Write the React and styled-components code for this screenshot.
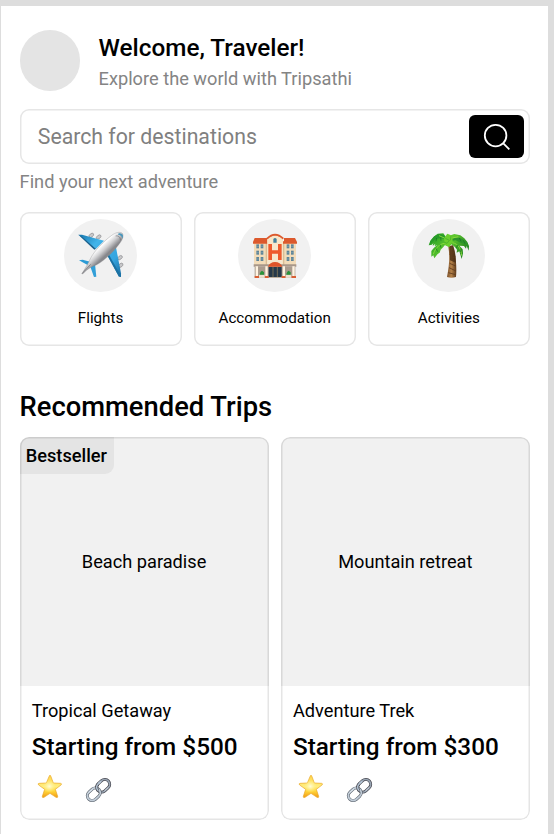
import React from "react";
import styled, { createGlobalStyle } from "styled-components";

const GlobalStyle = createGlobalStyle`
  *, *::before, *::after { box-sizing: border-box; }
  body { margin: 0; background: #dddddd; font-family: Roboto, sans-serif; color: #000; }
  h1, h2, p { margin: 0; }
  button { font: inherit; }
`;

const Screen = styled.main`
  width: 546.6px;
  height: 828px;
  margin: 6px 0 0 1.4px;
  padding: 24.2px 18.2px 0;
  background: #fff;
  overflow: hidden;
`;

const Header = styled.header`
  display: flex;
  align-items: center;
  gap: 18.2px;
  height: 60.8px;
`;

const Avatar = styled.div`
  width: 60.8px;
  height: 60.8px;
  border-radius: 50%;
  background: #e4e4e4;
`;

const Title = styled.h1`
  font-size: 24.3px;
  line-height: 36px;
  font-weight: 500;
`;

const Muted = styled.p`
  font-size: 18.23px;
  line-height: 25px;
  color: #848484;
`;

const SearchBar = styled.div`
  display: flex;
  align-items: center;
  justify-content: space-between;
  height: 54.4px;
  margin: 18.4px 0 5px;
  padding: 0 6px 0 18.2px;
  border-radius: 9px;
  box-shadow: inset 0 0 0 1.5px #e6e6e6;
`;

const SearchInput = styled.input`
  flex: 1;
  min-width: 0;
  padding: 0;
  border: 0;
  outline: 0;
  background: transparent;
  font: 400 21.25px Roboto, sans-serif;
  &::placeholder { color: #808080; opacity: 1; }
`;

const SearchButton = styled.button`
  display: grid;
  place-items: center;
  width: 55px;
  height: 42.6px;
  padding: 0;
  border: 0;
  border-radius: 6px;
  background: #000;
`;

const Categories = styled.nav`
  display: grid;
  grid-template-columns: repeat(3, 1fr);
  gap: 12.2px;
  margin-top: 18.6px;
`;

const Category = styled.div`
  display: flex;
  flex-direction: column;
  align-items: center;
  height: 134px;
  padding-top: 6.2px;
  border-radius: 9px;
  box-shadow: inset 0 0 0 1.5px #e6e6e6;
`;

const IconDisc = styled.div`
  display: grid;
  place-items: center;
  width: 73px;
  height: 73px;
  border-radius: 50%;
  background: #f1f1f1;
`;

const CategoryLabel = styled.span`
  margin-top: 15px;
  font-size: 15.2px;
  line-height: 22px;
`;

const SectionTitle = styled.h2`
  margin-top: 41.4px;
  font-size: 27.35px;
  line-height: 38px;
  font-weight: 500;
`;

const Trips = styled.section`
  display: grid;
  grid-template-columns: repeat(2, 1fr);
  gap: 12.2px;
  margin-top: 11.4px;
`;

const TripCard = styled.article`
  position: relative;
  height: 382.6px;
  border-radius: 9px;
  overflow: hidden;
  &::after {
    content: "";
    position: absolute;
    inset: 0;
    border-radius: 9px;
    box-shadow: inset 0 0 0 1.5px rgba(0, 0, 0, 0.1);
  }
`;

const TripImage = styled.div`
  position: relative;
  display: grid;
  place-items: center;
  height: 249px;
  background: #f1f1f1;
  font-size: 18.2px;
`;

const Badge = styled.span`
  position: absolute;
  top: 0;
  left: 0;
  padding: 6.6px 7.4px 5.4px 6.2px;
  border-bottom-right-radius: 9px;
  background: #e4e4e4;
  font-size: 18.2px;
  line-height: 24.5px;
  font-weight: 500;
`;

const TripBody = styled.div`
  padding: 11px 12.2px 0;
`;

const TripName = styled.p`
  font-size: 18.2px;
  line-height: 27px;
`;

const Price = styled.p`
  margin-top: 4.9px;
  font-size: 24.3px;
  line-height: 36px;
  font-weight: 500;
`;

const TripActions = styled.div`
  display: flex;
  gap: 20.5px;
  margin-top: 8.8px;
  padding-left: 4px;
`;

const SearchIcon = () => (
  <svg width="30" height="30" viewBox="-0.6 0.4 30 30" fill="none" stroke="#fff" strokeWidth="1.8">
    <circle cx="14" cy="14" r="10.8" />
    <path d="m21.7 21.7 6 6" />
  </svg>
);

const PlaneIcon = () => (
  <svg width="48" height="48" viewBox="65 63 144 144">
    <defs>
      <linearGradient id="planeBody" x1="125" y1="90" x2="160" y2="127" gradientUnits="userSpaceOnUse">
        <stop offset="0.1" stopColor="#c9c9cb" />
        <stop offset="0.42" stopColor="#ffffff" />
        <stop offset="0.7" stopColor="#cfcfd1" />
        <stop offset="1" stopColor="#88888c" />
      </linearGradient>
      <linearGradient id="planeWing" x1="70" y1="75" x2="200" y2="200" gradientUnits="userSpaceOnUse">
        <stop offset="0" stopColor="#1676ad" />
        <stop offset="0.3" stopColor="#42b4ea" />
        <stop offset="0.7" stopColor="#35a5e0" />
        <stop offset="1" stopColor="#176a9d" />
      </linearGradient>
    </defs>
    <g stroke="#77777b" strokeWidth="1.5" fill="#c8c8ca">
      <ellipse cx="108" cy="76" rx="8" ry="5" transform="rotate(-38 108 76)" />
      <ellipse cx="130" cy="81" rx="8" ry="5" transform="rotate(-38 130 81)" />
      <ellipse cx="194" cy="143" rx="8" ry="5" transform="rotate(-38 194 143)" />
      <ellipse cx="196" cy="166" rx="8" ry="5" transform="rotate(-38 196 166)" />
    </g>
    <path d="M69 74 80 74 146 92 122 116Z" fill="url(#planeWing)" />
    <path d="M69 74 80 80 122 116 117 119Z" fill="#17618f" />
    <path d="M157 138 182 112 197 190 197 201 191 200Z" fill="url(#planeWing)" />
    <path d="M157 138 161 134 194 193 191 200Z" fill="#1c71a2" />
    <path d="M71 151 82 149 110 157 102 168Z" fill="#2c9bd5" />
    <path d="M105 170 119 162 123 200 116 201Z" fill="#329fd8" />
    <path d="M80 191C93 169 99 160 104 148C116 123 148 91 168 77C181 67 194 64 201 70C207 79 200 92 190 104C170 130 144 154 124 164C111 169 99 174 82 192Z" fill="url(#planeBody)" stroke="#828287" strokeWidth="1" />
    <path d="M190 70C195 68 202 71 203 77L202 86C198 77 195 74 188 74Z" fill="#4a97bc" />
    <path d="M181 78C189 76 196 82 195 91" fill="none" stroke="#696970" strokeWidth="2" />
    <path d="M80 191 106 163" fill="none" stroke="#68686c" strokeWidth="2" />
  </svg>
);

const HOTEL_WINDOWS_X = [78, 91, 169, 182];
const HOTEL_WINDOWS_Y = [103, 122, 141];

const HotelIcon = () => (
  <svg width="48" height="48" viewBox="62 63 144 144">
    <path d="M71 94H197V169H71Z" fill="#f2dcb9" />
    <path d="M111 203V85Q134 61 157 85V203Z" fill="#f7e7cd" />
    <path d="M158 98H162V168H158ZM106 98H110V168H106Z" fill="#d9bd96" />
    <path d="M73 84H113V94H161V84H194L200 96V101H158V88Q134 62 111 88V101H68V96Z" fill="#dc592d" />
    <path d="M111 88Q134 65 158 88V101H111Z" fill="#f8e6c8" />
    <path d="M110 86Q134 62 159 86" fill="none" stroke="#dc592d" strokeWidth="5" />
    <path d="M129 98V87Q134 81 139 87V98Z" fill="#45819d" />
    {HOTEL_WINDOWS_Y.map((y) =>
      HOTEL_WINDOWS_X.map((x) => (
        <g key={`${x}-${y}`}>
          <rect x={x} y={y} width="8" height="12" fill="#5d8498" />
          <path d={`M${x} ${y + 6}h8`} stroke="#a6c1ca" strokeWidth="1" />
        </g>
      ))
    )}
    <path d="M114 102H125V121H143V102H154V150H143V131H125V150H114Z" fill="#ee5a2d" />
    <path d="M70 163H198V170H70Z" fill="#a8988a" />
    <path d="M73 170H195V203H73Z" fill="#aa9c8e" />
    <path d="M115 171H154V201H115Z" fill="#26394a" />
    <path d="M128 171V201M141 171V201" stroke="#9c8759" strokeWidth="2" />
    <path d="M113 170Q119 156 134 156Q150 156 156 170Z" fill="#df5429" />
    <path d="M76 169H83V202H76ZM105 169H112V202H105ZM157 169H164V202H157ZM186 169H193V202H186Z" fill="#fff3e0" />
    <path d="M73 198H86V204H73ZM103 198H115V204H103ZM154 198H166V204H154ZM183 198H197V204H183Z" fill="#d95f34" />
    <path d="M86 194H103V203H86ZM166 194H183V203H166Z" fill="#eee1cf" />
    <path d="M88 192 91 185 95 182 101 187 101 194H88ZM168 192 171 185 175 182 181 187 181 194H168Z" fill="#28933a" />
  </svg>
);

const PalmIcon = () => (
  <svg width="48" height="48" viewBox="63 63 144 144">
    <defs>
      <linearGradient id="palmTrunk" x1="130" x2="156" y1="0" y2="0" gradientUnits="userSpaceOnUse">
        <stop stopColor="#80552f" />
        <stop offset="0.45" stopColor="#b58249" />
        <stop offset="1" stopColor="#65401f" />
      </linearGradient>
      <linearGradient id="palmLeaf" x1="80" x2="185" y1="70" y2="140" gradientUnits="userSpaceOnUse">
        <stop stopColor="#229b25" />
        <stop offset="0.5" stopColor="#5fc72f" />
        <stop offset="1" stopColor="#18791e" />
      </linearGradient>
    </defs>
    <path d="M135 108 147 106C155 132 159 170 156 201Q142 206 129 201C136 165 138 138 133 111Z" fill="url(#palmTrunk)" />
    <path d="M136 109 147 106C155 129 156 145 155 158L138 151Z" fill="#432812" opacity="0.75" />
    <path d="M137 133 151 127M138 148 154 140M137 160 155 168M135 173 156 183M133 188 155 194" stroke="#5e3b1e" strokeWidth="2.5" />
    <path d="M134 92 118 70 101 71 89 80 80 91 74 106 84 104 88 99 86 108 94 101 92 109 101 104 90 113 82 123 82 140 88 136 91 145 101 132 107 128 110 119 118 111 123 105 135 111 142 103 152 110 159 119 158 128 166 124 173 147 177 130 176 118 166 107 180 108 186 116 188 107 194 122 195 108 190 96 181 85 169 76 151 72 136 77Z" fill="url(#palmLeaf)" />
    <path d="M132 93C113 80 95 83 80 101L77 103 78 95 91 79 105 72 119 74Z" fill="#279b29" />
    <path d="M134 94C151 78 174 81 190 99L191 113 184 103 171 99 155 91Z" fill="#2d942b" />
    <path d="M131 100C111 97 94 112 88 133M145 98C164 102 171 117 173 137M121 84 105 77M145 84 163 80" fill="none" stroke="#87d83c" strokeWidth="3" />
    <path d="M120 85 130 71 145 77 146 94 135 111 122 104Z" fill="#6bcf2e" />
    <path d="M124 85 136 91 129 100 120 96M141 78 139 91" fill="none" stroke="#43a62a" strokeWidth="2" />
    <path d="M98 84 96 94M110 82 111 92M166 84 171 94M178 91 183 101M108 104 111 113M96 115 101 125M161 105 157 114M171 116 169 126" stroke="#14721f" strokeWidth="2" />
  </svg>
);

const StarIcon = () => (
  <svg width="28" height="28" viewBox="0 0 84 84">
    <defs>
      <linearGradient id="starFill" x1="0" y1="0" x2="0" y2="1">
        <stop stopColor="#ffd64c" />
        <stop offset="0.5" stopColor="#ffed7d" />
        <stop offset="0.72" stopColor="#ffd53a" />
        <stop offset="1" stopColor="#f29a12" />
      </linearGradient>
      <radialGradient id="starGlow">
        <stop stopColor="#fffbd8" />
        <stop offset="1" stopColor="#fff393" stopOpacity="0" />
      </radialGradient>
    </defs>
    <path d="M42 4Q44 4 45 8L52 27 74 28Q79 29 75 33L58 46 65 67Q66 72 60 70L42 58 24 70Q18 72 19 67L26 46 8 33Q4 29 9 28L31 27 39 8Q40 4 42 4Z" fill="url(#starFill)" stroke="#e9a524" strokeWidth="2" />
    <circle cx="40" cy="37" r="19" fill="url(#starGlow)" />
  </svg>
);

const LinkIcon = () => (
  <svg width="28" height="28" viewBox="-1.5 -2 84 84" fill="none">
    <g transform="rotate(-42 42 46)">
      <rect x="40" y="31.5" width="42" height="29" rx="14.5" stroke="#46464f" strokeWidth="9" />
      <rect x="40" y="31.5" width="42" height="29" rx="14.5" stroke="#98a4b2" strokeWidth="5" />
      <rect x="2" y="31.5" width="42" height="29" rx="14.5" stroke="#5a626c" strokeWidth="9" />
      <rect x="2" y="31.5" width="42" height="29" rx="14.5" stroke="#c1ccd7" strokeWidth="5.5" />
      <path d="M40 46A14.5 14.5 0 0 1 54.5 31.5" stroke="#46464f" strokeWidth="9" />
      <path d="M40 46A14.5 14.5 0 0 1 54.5 31.5H66" stroke="#b4c4d3" strokeWidth="5" />
      <path d="M14 32H31M54 60H69" stroke="#edf4fa" strokeWidth="2" />
    </g>
  </svg>
);

const CATEGORIES = [
  { label: "Flights", Icon: PlaneIcon },
  { label: "Accommodation", Icon: HotelIcon },
  { label: "Activities", Icon: PalmIcon },
];

const TRIPS = [
  { image: "Beach paradise", name: "Tropical Getaway", price: "$500", badge: "Bestseller" },
  { image: "Mountain retreat", name: "Adventure Trek", price: "$300" },
];

export default function App() {
  return (
    <>
      <GlobalStyle />
      <Screen>
        <Header>
          <Avatar />
          <div>
            <Title>Welcome, Traveler!</Title>
            <Muted>Explore the world with Tripsathi</Muted>
          </div>
        </Header>
        <SearchBar>
          <SearchInput placeholder="Search for destinations" />
          <SearchButton aria-label="Search"><SearchIcon /></SearchButton>
        </SearchBar>
        <Muted>Find your next adventure</Muted>
        <Categories>
          {CATEGORIES.map(({ label, Icon }) => (
            <Category key={label}>
              <IconDisc><Icon /></IconDisc>
              <CategoryLabel>{label}</CategoryLabel>
            </Category>
          ))}
        </Categories>
        <SectionTitle>Recommended Trips</SectionTitle>
        <Trips>
          {TRIPS.map((trip) => (
            <TripCard key={trip.name}>
              <TripImage>
                {trip.badge && <Badge>{trip.badge}</Badge>}
                {trip.image}
              </TripImage>
              <TripBody>
                <TripName>{trip.name}</TripName>
                <Price>Starting from {trip.price}</Price>
                <TripActions><StarIcon /><LinkIcon /></TripActions>
              </TripBody>
            </TripCard>
          ))}
        </Trips>
      </Screen>
    </>
  );
}
